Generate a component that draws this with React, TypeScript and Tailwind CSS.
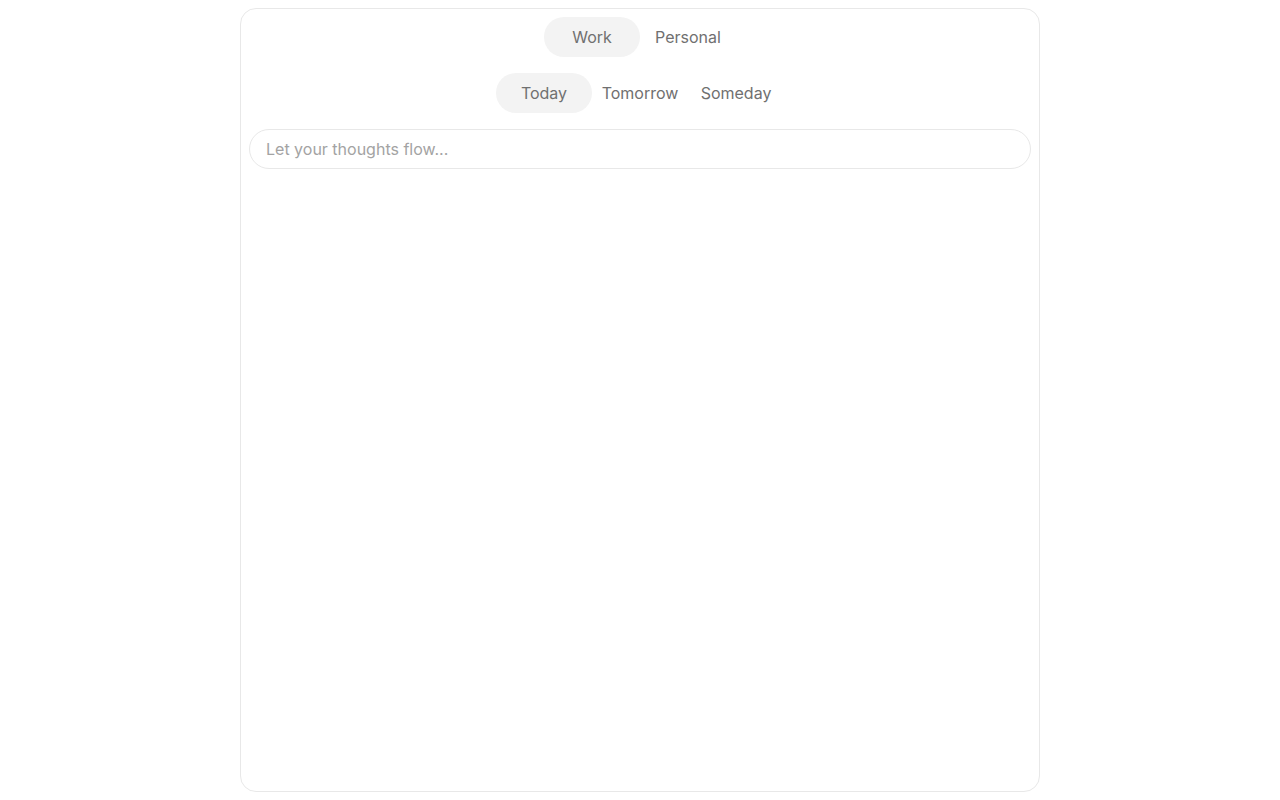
import React, { useState } from 'react';

const lists = ['Work', 'Personal'];
const days = ['Today', 'Tomorrow', 'Someday'];

const Tab = ({ label, active, onClick }: { label: string; active: boolean; onClick: () => void }) => (
  <button
    onClick={onClick}
    className={`w-24 h-10 rounded-full text-[16px] text-[#707070] ${active ? 'bg-[#f3f3f3]' : ''}`}
  >
    {label}
  </button>
);

export default function App() {
  const [list, setList] = useState('Work');
  const [day, setDay] = useState('Today');
  const [text, setText] = useState('');

  return (
    <div className="min-h-screen bg-white py-2 font-['Inter',sans-serif]">
      <div className="mx-auto w-[800px] h-[784px] border border-[#e8e8e8] rounded-2xl p-2 flex flex-col gap-4">
        {/* list switcher */}
        <div className="flex justify-center">
          {lists.map((l) => (
            <Tab key={l} label={l} active={list === l} onClick={() => setList(l)} />
          ))}
        </div>

        {/* day switcher */}
        <div className="flex justify-center">
          {days.map((d) => (
            <Tab key={d} label={d} active={day === d} onClick={() => setDay(d)} />
          ))}
        </div>

        <input
          value={text}
          onChange={(e) => setText(e.target.value)}
          placeholder="Let your thoughts flow..."
          className="h-10 w-full rounded-full border border-[#e8e8e8] px-4 text-[16px] text-[#707070] placeholder:text-[#a3a3a3] outline-none"
        />
      </div>
    </div>
  );
}
